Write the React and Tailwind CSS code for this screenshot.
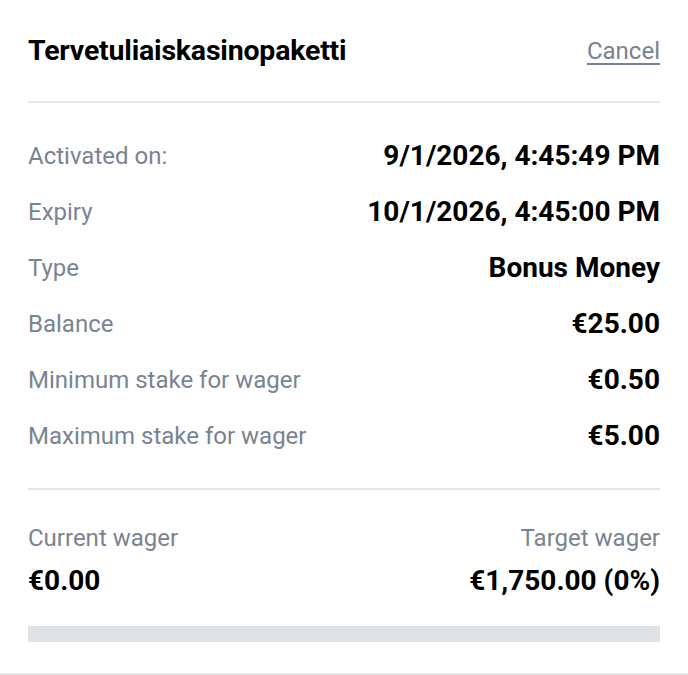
const rows = [
  ["Activated on:", "9/1/2026, 4:45:49 PM"],
  ["Expiry", "10/1/2026, 4:45:00 PM"],
  ["Type", "Bonus Money"],
  ["Balance", "€25.00"],
  ["Minimum stake for wager", "€0.50"],
  ["Maximum stake for wager", "€5.00"],
];

export default function App() {
  return (
    <div className="w-[688px] h-[675px] bg-white font-['Roboto',sans-serif] text-black">
      <div className="px-[28px]">
        <div className="h-[101px] flex items-center justify-between">
          <h1 className="text-[28.5px] leading-[32px] font-bold tracking-[-0.2px]">
            Tervetuliaiskasinopaketti
          </h1>
          <button className="text-[24px] leading-[28px] text-[#788291] underline underline-offset-[4px]">
            Cancel
          </button>
        </div>
        <div className="h-[2px] bg-[#e6e6e6]" />

        <div className="pt-[25px] pb-[24px]">
          {rows.map(([label, value]) => (
            <div key={label} className="h-[56px] flex items-center justify-between">
              <span className="text-[24px] leading-[28px] text-[#7a8392]">{label}</span>
              <span className="text-[28px] leading-[32px] font-bold">{value}</span>
            </div>
          ))}
        </div>
        <div className="h-[2px] bg-[#e6e6e6]" />

        <div className="pt-[34px] flex justify-between">
          <div className="flex flex-col gap-[13px]">
            <span className="text-[24px] leading-[28px] text-[#7a8392]">Current wager</span>
            <span className="text-[28px] leading-[32px] font-bold">€0.00</span>
          </div>
          <div className="flex flex-col gap-[13px] items-end">
            <span className="text-[24px] leading-[28px] text-[#7a8392]">Target wager</span>
            <span className="text-[28px] leading-[32px] font-bold">€1,750.00 (0%)</span>
          </div>
        </div>
        <div className="mt-[29px] h-[16px] bg-[#dfe2e7]" />
      </div>
      <div className="mt-[31px] h-[2px] bg-[#e6e6e6]" />
    </div>
  );
}
